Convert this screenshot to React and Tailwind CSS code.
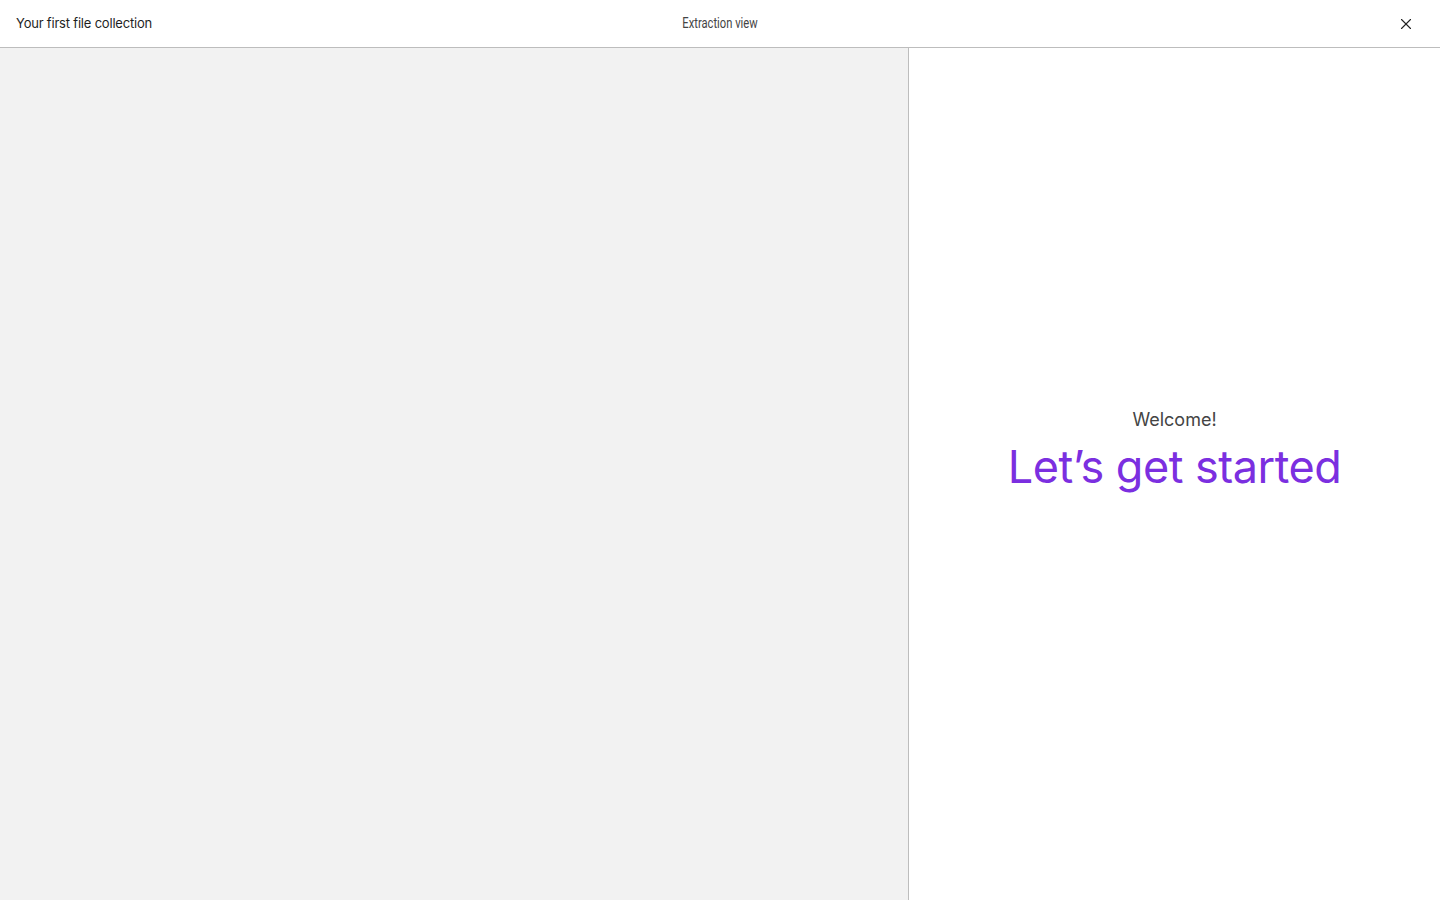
import { X } from 'lucide-react'

export default function App() {
  return (
    <div className="flex h-screen w-full flex-col bg-white font-['Inter',sans-serif]">
      {/* Header */}
      <header className="relative flex h-[48px] shrink-0 items-center justify-between border-b border-[#bdbdbd] px-4">
        <h1 className="text-[13px] tracking-[-0.2px] text-[#1f1f1f]">Your first file collection</h1>
        <span className="absolute left-1/2 -translate-x-1/2 scale-x-[0.8] font-['Roboto',sans-serif] text-[14px] text-[#444]">
          Extraction view
        </span>
        <button className="mr-[9px] text-[#222]">
          <X className="h-[18px] w-[18px]" strokeWidth={1.5} />
        </button>
      </header>

      <div className="flex flex-1">
        {/* Document pane */}
        <div className="w-[909px] shrink-0 border-r border-[#bdbdbd] bg-[#f2f2f2]" />

        {/* Extraction pane */}
        <div className="flex flex-1 flex-col items-center justify-center pb-[46px]">
          <p className="text-[18px] text-[#444]">Welcome!</p>
          <h2 className="mt-[6px] text-[45px] leading-tight tracking-[-0.5px] text-[#7b2fe0]">Let’s get started</h2>
        </div>
      </div>
    </div>
  )
}
